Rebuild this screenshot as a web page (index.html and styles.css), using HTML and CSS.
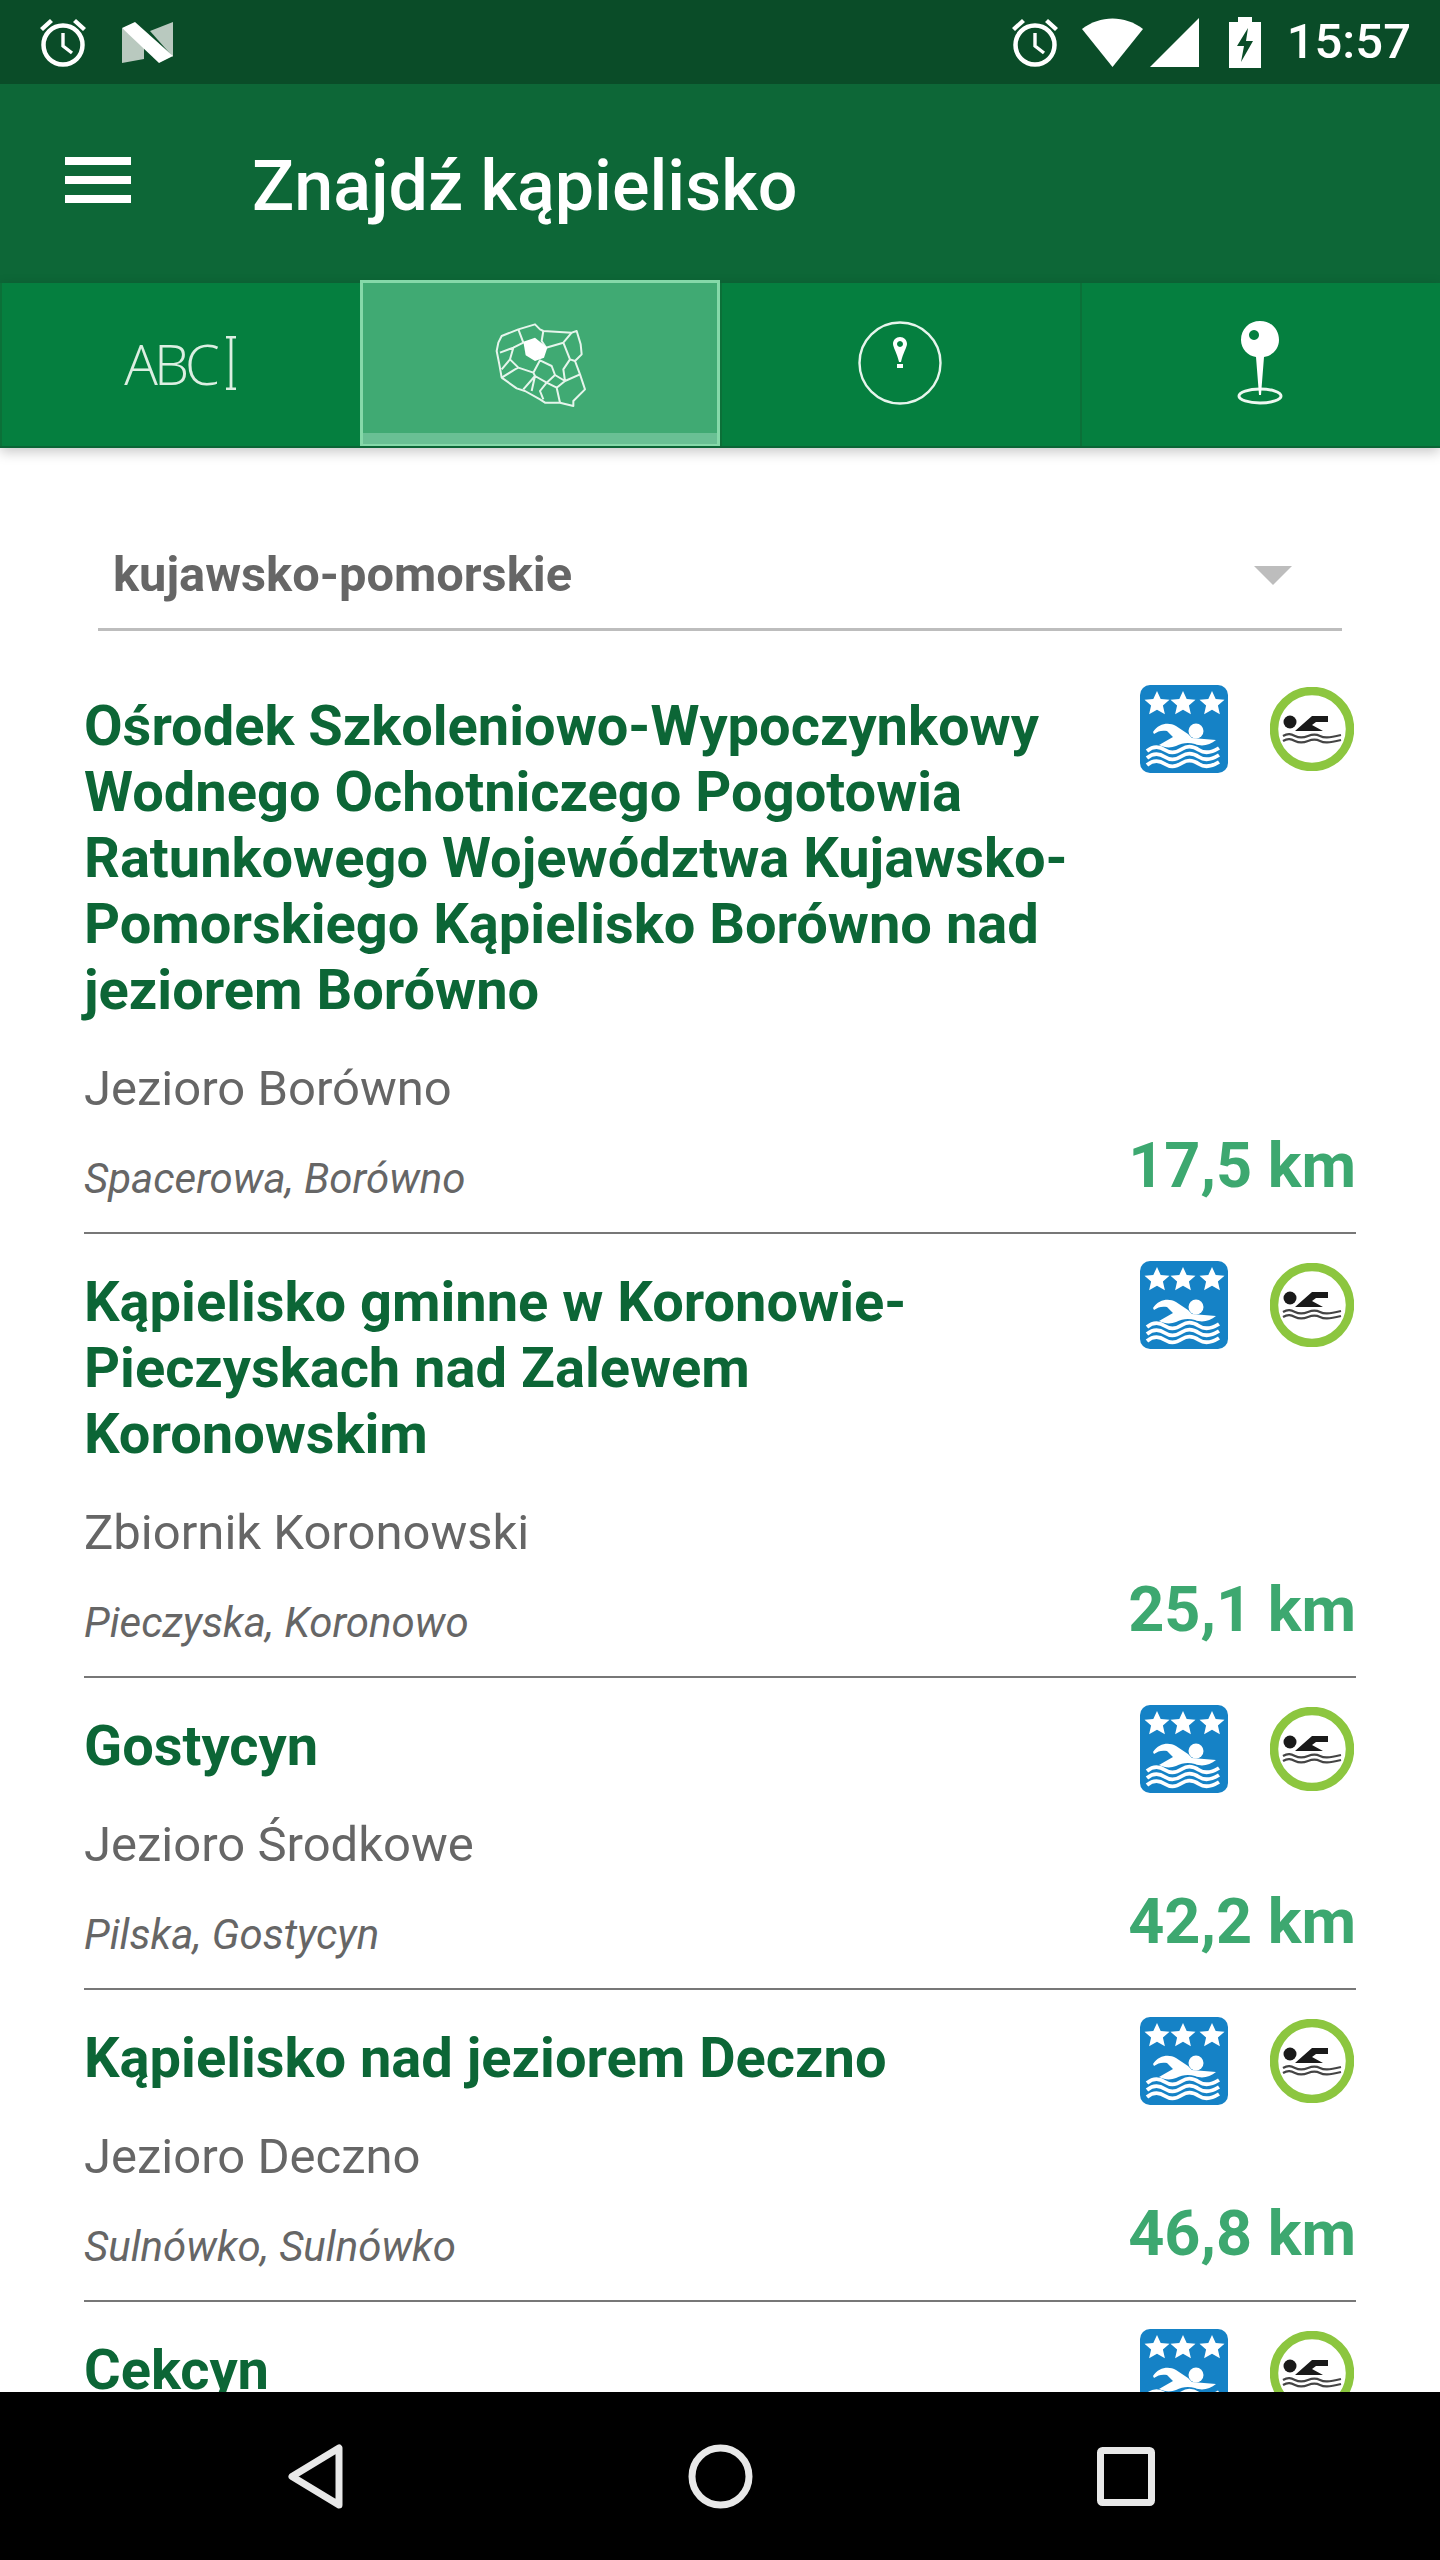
FILE: index.html
```html
<!DOCTYPE html>
<html lang="pl">
<head>
<meta charset="utf-8">
<title>Znajdź kąpielisko</title>
<link rel="stylesheet" href="styles.css">
</head>
<body>
<svg class="defs" width="0" height="0" aria-hidden="true">
  <symbol id="alarm" viewBox="0 0 48 50">
    <circle cx="24" cy="28" r="19.5" fill="none" stroke="#fff" stroke-width="4.5"/>
    <path d="M24 16v13l9 7" fill="none" stroke="#fff" stroke-width="3.4"/>
    <path d="M1 11 11 2l3 3-10 9zM47 11 37 2l-3 3 10 9z" fill="#fff"/>
  </symbol>
  <symbol id="blue" viewBox="0 0 88 88">
    <rect width="88" height="88" rx="10" fill="#1582c6"/>
    <path d="M17 6l3.700 8 8.800.8-6.600 5.800 2 8.700L17 24.700l-7.900 4.600 2-8.700-6.600-5.800 8.800-.8z" fill="#fff"/>
    <path d="M43 6l3.700 8 8.800.8-6.600 5.800 2 8.700L43 24.700l-7.900 4.600 2-8.700-6.600-5.800 8.800-.8z" fill="#fff"/>
    <path d="M72 6l3.700 8 8.800.8-6.600 5.800 2 8.700L72 24.700l-7.900 4.600 2-8.700-6.600-5.800 8.800-.8z" fill="#fff"/>
    <circle cx="56" cy="46" r="7.500" fill="#fff"/>
    <path d="M13 47C19 38 29 37 36 41L48 49 52 53 76 55C70 60 62 62 55 59 48 57 42 58 36 61 31 63 25 63 19 60L33 52 27 46C22 45 18 46 14 49z" fill="#fff"/>
    <path d="M7 66c6-5 12-5 18-1s11 3 17-1 11-3 17 1 12 3 20-2M7 73c6-5 12-5 18-1s11 3 17-1 11-3 17 1 12 3 20-2M7 80c6-5 12-5 18-1s11 3 17-1 11-3 17 1 12 3 20-2" fill="none" stroke="#fff" stroke-width="3.800"/>
  </symbol>
  <symbol id="green" viewBox="0 0 84 84">
    <circle cx="42" cy="42" r="38" fill="#fff" stroke="#8cc63f" stroke-width="8.500"/>
    <circle cx="20" cy="35" r="6.500" fill="#1a1a1a"/>
    <path d="M25 44 42 29H58V35H46L42 38 53 44z" fill="#1a1a1a"/>
    <path d="M13 49c5-3 8-2 12 0s8 2 13 0 8-2 12 0 8 2 21-1M13 54c5-3 8-2 12 0s8 2 13 0 8-2 12 0 8 2 21-1" fill="none" stroke="#444" stroke-width="2.200"/>
  </symbol>
</svg>

<div class="phone">
  <header class="status">
    <div class="status-group">
      <svg class="ic-alarm"><use href="#alarm"/></svg>
      <svg class="ic-n" viewBox="0 0 51 41">
        <path d="M0 6 22 22V37L0 41z" fill="#b9c9bf"/>
        <path d="M28 9 51 0V35z" fill="#b9c9bf"/>
        <path d="M0 6 13 0 51 34 37 41z" fill="#fff"/>
      </svg>
    </div>
    <div class="status-group right">
      <svg class="ic-alarm"><use href="#alarm"/></svg>
      <svg class="ic-wifi" viewBox="0 0 61 49"><path d="M0 11C18-3 43-3 61 11L30.500 49z" fill="#fff"/></svg>
      <svg class="ic-signal" viewBox="0 0 49 49"><path d="M49 0V49H0z" fill="#fff"/></svg>
      <svg class="ic-batt" viewBox="0 0 32 51"><path fill-rule="evenodd" d="M9 0h14v5h9v46H0V5h9zM19 11 8 29h7l-3 16 12-21h-7z" fill="#fff"/></svg>
      <span class="clock">15:57</span>
    </div>
  </header>

  <div class="toolbar">
    <div class="burger"><i></i><i></i><i></i></div>
    <h1 class="title">Znajdź kąpielisko</h1>
  </div>

  <nav class="tabs">
    <div class="tab">
      <span class="abc">ABC</span>
      <svg class="ibeam" viewBox="0 0 10 54"><path d="M0 1h10M0 53h10M5 1v52" fill="none" stroke="#dcefe2" stroke-width="2.800"/></svg>
    </div>
    <div class="tab active">
      <svg class="ic-map" viewBox="0 0 480 360">
        <g fill="none" stroke="#e6f5ec" stroke-width="6" stroke-linejoin="round">
          <path d="M115 125 125 105 175 85 225 70 240 85 250 90 335 95 350 90 362 130 365 160 345 180 360 220 375 265 340 300 340 315 300 305 255 305 240 295 195 270 170 262 125 230 118 190 110 150z"/>
          <path d="M175 85 190 125 160 140 120 155M160 140 150 175 125 205M150 175 175 200 220 215 240 178 275 195 285 222 260 245 225 225 190 265M125 230 165 205 175 200M220 215 225 225M250 90 245 120 258 140 310 125 335 95M310 125 330 175 345 180M330 175 310 205 315 240 285 222M315 240 360 220M260 245 290 260 315 240M290 260 300 305M260 245 240 270 250 295M225 225 215 270"/>
        </g>
        <path d="M190 122 225 110 262 140 252 170 225 180 197 163z" fill="#fff"/>
      </svg>
      <span class="strip"></span>
    </div>
    <div class="tab">
      <svg class="ic-circle" viewBox="0 0 84 84">
        <circle cx="42" cy="42" r="40.500" fill="none" stroke="#e6f5ec" stroke-width="2.400"/>
        <path fill-rule="evenodd" d="M42 16c4 0 7 3 7 7 0 3-4 9-6 18h-2c-2-9-6-15-6-18 0-4 3-7 7-7zM42 20a3 3 0 1 0 .01 0zM39 43h6v4h-6z" fill="#fff"/>
      </svg>
    </div>
    <div class="tab">
      <svg class="ic-pin" viewBox="0 0 46 84">
        <ellipse cx="23" cy="75" rx="21" ry="7" fill="none" stroke="#eef8f1" stroke-width="3"/>
        <path fill-rule="evenodd" d="M23 0c11 0 19 8 19 19 0 9-7 16-15 17L24 74h-2l-3-38C11 35 4 28 4 19 4 8 12 0 23 0zM17 9a5 5 0 1 0 .01 0z" fill="#fff"/>
      </svg>
    </div>
  </nav>

  <main class="content">
    <div class="select">
      <span class="select-text">kujawsko-pomorskie</span>
      <span class="caret"></span>
    </div>

    <ul class="list">
      <li class="item">
        <div class="info">
          <h2 class="name">Ośrodek Szkoleniowo-Wypoczynkowy Wodnego Ochotniczego Pogotowia Ratunkowego Województwa Kujawsko-Pomorskiego Kąpielisko Borówno nad jeziorem Borówno</h2>
          <p class="lake">Jezioro Borówno</p>
          <p class="addr">Spacerowa, Borówno</p>
        </div>
        <div class="side">
          <div class="badges"><svg class="b-blue"><use href="#blue"/></svg><svg class="b-green"><use href="#green"/></svg></div>
          <span class="dist">17,5 km</span>
        </div>
      </li>
      <li class="item">
        <div class="info">
          <h2 class="name">Kąpielisko gminne w Koronowie-Pieczyskach nad Zalewem Koronowskim</h2>
          <p class="lake">Zbiornik Koronowski</p>
          <p class="addr">Pieczyska, Koronowo</p>
        </div>
        <div class="side">
          <div class="badges"><svg class="b-blue"><use href="#blue"/></svg><svg class="b-green"><use href="#green"/></svg></div>
          <span class="dist">25,1 km</span>
        </div>
      </li>
      <li class="item">
        <div class="info">
          <h2 class="name">Gostycyn</h2>
          <p class="lake">Jezioro Środkowe</p>
          <p class="addr">Pilska, Gostycyn</p>
        </div>
        <div class="side">
          <div class="badges"><svg class="b-blue"><use href="#blue"/></svg><svg class="b-green"><use href="#green"/></svg></div>
          <span class="dist">42,2 km</span>
        </div>
      </li>
      <li class="item">
        <div class="info">
          <h2 class="name">Kąpielisko nad jeziorem Deczno</h2>
          <p class="lake">Jezioro Deczno</p>
          <p class="addr">Sulnówko, Sulnówko</p>
        </div>
        <div class="side">
          <div class="badges"><svg class="b-blue"><use href="#blue"/></svg><svg class="b-green"><use href="#green"/></svg></div>
          <span class="dist">46,8 km</span>
        </div>
      </li>
      <li class="item">
        <div class="info">
          <h2 class="name">Cekcyn</h2>
        </div>
        <div class="side">
          <div class="badges"><svg class="b-blue"><use href="#blue"/></svg><svg class="b-green"><use href="#green"/></svg></div>
        </div>
      </li>
    </ul>
  </main>

  <footer class="navbar">
    <svg class="nav-back" viewBox="0 0 55 65"><path d="M51 4V61L4 32.500z" fill="none" stroke="#e8e8e8" stroke-width="7" stroke-linejoin="round"/></svg>
    <svg class="nav-home" viewBox="0 0 65 65"><circle cx="32.500" cy="32.500" r="28.500" fill="none" stroke="#e8e8e8" stroke-width="7"/></svg>
    <svg class="nav-recent" viewBox="0 0 58 59"><rect x="3.500" y="3.500" width="51" height="52" rx="2" fill="none" stroke="#e8e8e8" stroke-width="7"/></svg>
  </footer>
</div>
</body>
</html>
```

FILE: styles.css
```css
* { box-sizing: border-box; }
html, body { margin: 0; padding: 0; background: #fff; }
.defs { position: absolute; }
.phone {
  width: 1440px;
  height: 2560px;
  display: flex;
  flex-direction: column;
  overflow: hidden;
  font-family: Roboto, "Liberation Sans", sans-serif;
  background: #fff;
}

/* status bar */
.status {
  flex: 0 0 84px;
  background: #0a4c28;
  display: flex;
  justify-content: space-between;
  align-items: center;
  padding: 0 29px 0 39px;
}
.status-group { display: flex; align-items: center; gap: 35px; }
.status-group.right { gap: 0; }
.ic-alarm { width: 48px; height: 50px; display: block; }
.ic-n { width: 51px; height: 41px; }
.ic-wifi { width: 61px; height: 49px; margin-left: 23px; }
.ic-signal { width: 49px; height: 49px; margin-left: 7px; }
.ic-batt { width: 32px; height: 51px; margin-left: 30px; }
.clock { color: #fff; font-size: 49px; font-weight: 500; line-height: 50px; margin-left: 26px; }

/* toolbar */
.toolbar {
  flex: 0 0 199px;
  background: #0d6737;
  display: flex;
  align-items: center;
  padding: 0 0 7px 65px;
}
.burger { width: 66px; display: flex; flex-direction: column; gap: 11px; }
.burger i { display: block; height: 8px; background: #fff; }
.title { margin: 12px 0 0 121px; color: #fff; font-size: 70px; font-weight: 500; line-height: 80px; }

/* tabs */
.tabs {
  flex: 0 0 165px;
  display: grid;
  grid-template-columns: repeat(4, 360px);
  background: #057f3f;
  border-bottom: 2px solid #0b6536;
  box-shadow: 0 4px 12px rgba(0, 0, 0, .22);
  position: relative;
  z-index: 2;
}
.tab {
  display: flex;
  align-items: center;
  justify-content: center;
  box-shadow: inset 2px 0 0 #0b7038;
  position: relative;
  padding-bottom: 3px;
}
.tab.active {
  background: #40aa73;
  margin-top: -3px;
  border: 3px solid #85d9a9;
  border-bottom-width: 2px;
  box-shadow: none;
  padding-bottom: 6px;
}
.strip {
  position: absolute;
  left: 0;
  right: 0;
  bottom: 0;
  height: 11px;
  background: #69c094;
}
.abc {
  color: #dcefe2;
  font-family: "Open Sans", sans-serif;
  font-weight: 300;
  font-size: 56px;
  line-height: 60px;
  letter-spacing: -4px;
}
.ibeam { width: 10px; height: 54px; margin-left: 10px; }
.ic-map { width: 160px; height: 120px; }
.ic-circle { width: 84px; height: 84px; }
.ic-pin { width: 46px; height: 84px; }

/* content */
.content { flex: 1 1 0; min-height: 0; overflow: hidden; }
.select {
  margin: 0 98px;
  height: 183px;
  border-bottom: 3px solid #bdbdbd;
  padding: 74px 50px 0 15px;
  display: flex;
  justify-content: space-between;
  align-items: center;
}
.select-text { color: #666; font-size: 48.800px; font-weight: 700; line-height: 60px; }
.caret {
  width: 0;
  height: 0;
  border-left: 19px solid transparent;
  border-right: 19px solid transparent;
  border-top: 19px solid #bdbdbd;
}
.list { list-style: none; margin: 27px 84px 0; padding: 0; }
.item {
  display: flex;
  justify-content: space-between;
  border-bottom: 2px solid #777;
  padding-top: 29px;
  padding-bottom: 25px;
}
.list .item:last-child { border-bottom: 0; }
.info { width: 1010px; padding-top: 6px; }
.name { margin: 0; color: #0c6636; font-size: 56px; font-weight: 700; line-height: 66px; }
.lake { margin: 33px 0 0; color: #666; font-size: 49px; line-height: 66px; }
.addr { margin: 29px 0 0; color: #666; font-size: 42px; font-style: italic; line-height: 56px; }
.side { display: flex; flex-direction: column; justify-content: space-between; align-items: flex-end; }
.badges { display: flex; align-items: center; gap: 42px; margin: -2px 2px 0 0; }
.b-blue { width: 88px; height: 88px; }
.b-green { width: 84px; height: 84px; }
.dist { color: #3da870; font-size: 63px; font-weight: 700; line-height: 70px; margin-bottom: 6px; white-space: nowrap; }

/* nav bar */
.navbar {
  flex: 0 0 168px;
  background: #000;
  display: flex;
  align-items: center;
  position: relative;
  z-index: 2;
  padding-left: 288px;
}
.nav-back { width: 55px; height: 65px; }
.nav-home { width: 65px; height: 65px; margin-left: 345px; }
.nav-recent { width: 58px; height: 59px; margin-left: 344px; }
```
